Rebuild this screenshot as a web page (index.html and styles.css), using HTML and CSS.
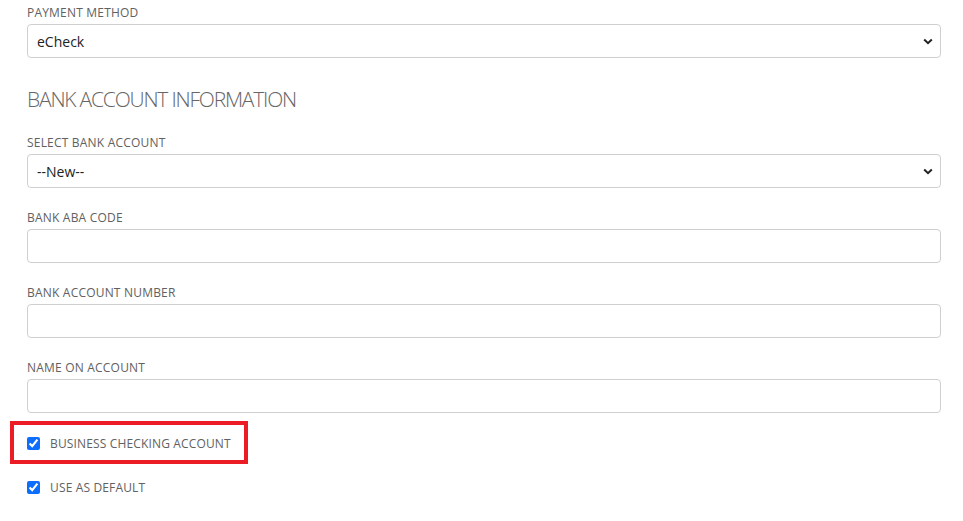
FILE: index.html
```html
<!DOCTYPE html>
<html>
<head>
<meta charset="utf-8">
<link rel="stylesheet" href="styles.css">
</head>
<body>
<form class="form">
  <div class="group">
    <label class="label">PAYMENT METHOD</label>
    <select class="control select"><option>eCheck</option></select>
  </div>
  <h2 class="heading">BANK ACCOUNT INFORMATION</h2>
  <div class="group">
    <label class="label">SELECT BANK ACCOUNT</label>
    <select class="control select"><option>--New--</option></select>
  </div>
  <div class="group">
    <label class="label">BANK ABA CODE</label>
    <input class="control" type="text">
  </div>
  <div class="group">
    <label class="label">BANK ACCOUNT NUMBER</label>
    <input class="control" type="text">
  </div>
  <div class="group">
    <label class="label">NAME ON ACCOUNT</label>
    <input class="control" type="text">
  </div>
  <div class="highlight">
    <label class="check"><input type="checkbox" checked><span>BUSINESS CHECKING ACCOUNT</span></label>
  </div>
  <label class="check check-last"><input type="checkbox" checked><span>USE AS DEFAULT</span></label>
</form>
</body>
</html>
```
FILE: styles.css
```css
* { box-sizing: border-box; }
html, body { margin: 0; background: #fff; }
body {
  font-family: "Open Sans", "Segoe UI", sans-serif;
  color: #555;
}
.form {
  width: 941px;
  padding: 4px 0 0 27px;
  display: flex;
  flex-direction: column;
}
.group {
  display: flex;
  flex-direction: column;
  margin-bottom: 21px;
}
.label {
  font-size: 12px;
  line-height: 18px;
  height: 18px;
  margin-bottom: 2px;
  color: #616161;
  font-weight: 400;
  letter-spacing: 0.2px;
}
.control {
  width: 914px;
  height: 34px;
  border: 1px solid #cfcfcf;
  border-radius: 4px;
  background: #fff;
  font-family: "Open Sans", sans-serif;
  font-size: 14px;
  color: #222;
  padding: 0 9px;
  margin: 0;
  outline: none;
}
.select {
  appearance: none;
  -webkit-appearance: none;
  background-image: url("data:image/svg+xml,%3Csvg xmlns='http://www.w3.org/2000/svg' width='10' height='7' viewBox='0 0 10 7'%3E%3Cpath d='M1.2 1.5 5 5.2 8.8 1.5' fill='none' stroke='%23222' stroke-width='2'/%3E%3C/svg%3E");
  background-repeat: no-repeat;
  background-position: right 7px center;
  background-size: 10px 7px;
}
.heading {
  margin: 5px 0 0 0;
  height: 50px;
  font-size: 21px;
  line-height: 30px;
  font-weight: 300;
  color: #666;
  letter-spacing: -1.2px;
}
.highlight {
  align-self: flex-start;
  margin: -13px 0 0 -17px;
  border: 4px solid #ec1c24;
  padding: 0 13px 0 13px;
  height: 43px;
  display: flex;
  align-items: center;
}
.check {
  display: flex;
  align-items: center;
  font-size: 12px;
  color: #616161;
  letter-spacing: 0.15px;
}
.check input {
  width: 13px;
  height: 13px;
  margin: 0 10px 0 0;
  accent-color: #0d6efd;
}
.highlight .check { margin-top: 2px; }
.check-last { margin-top: 15px; }
```
